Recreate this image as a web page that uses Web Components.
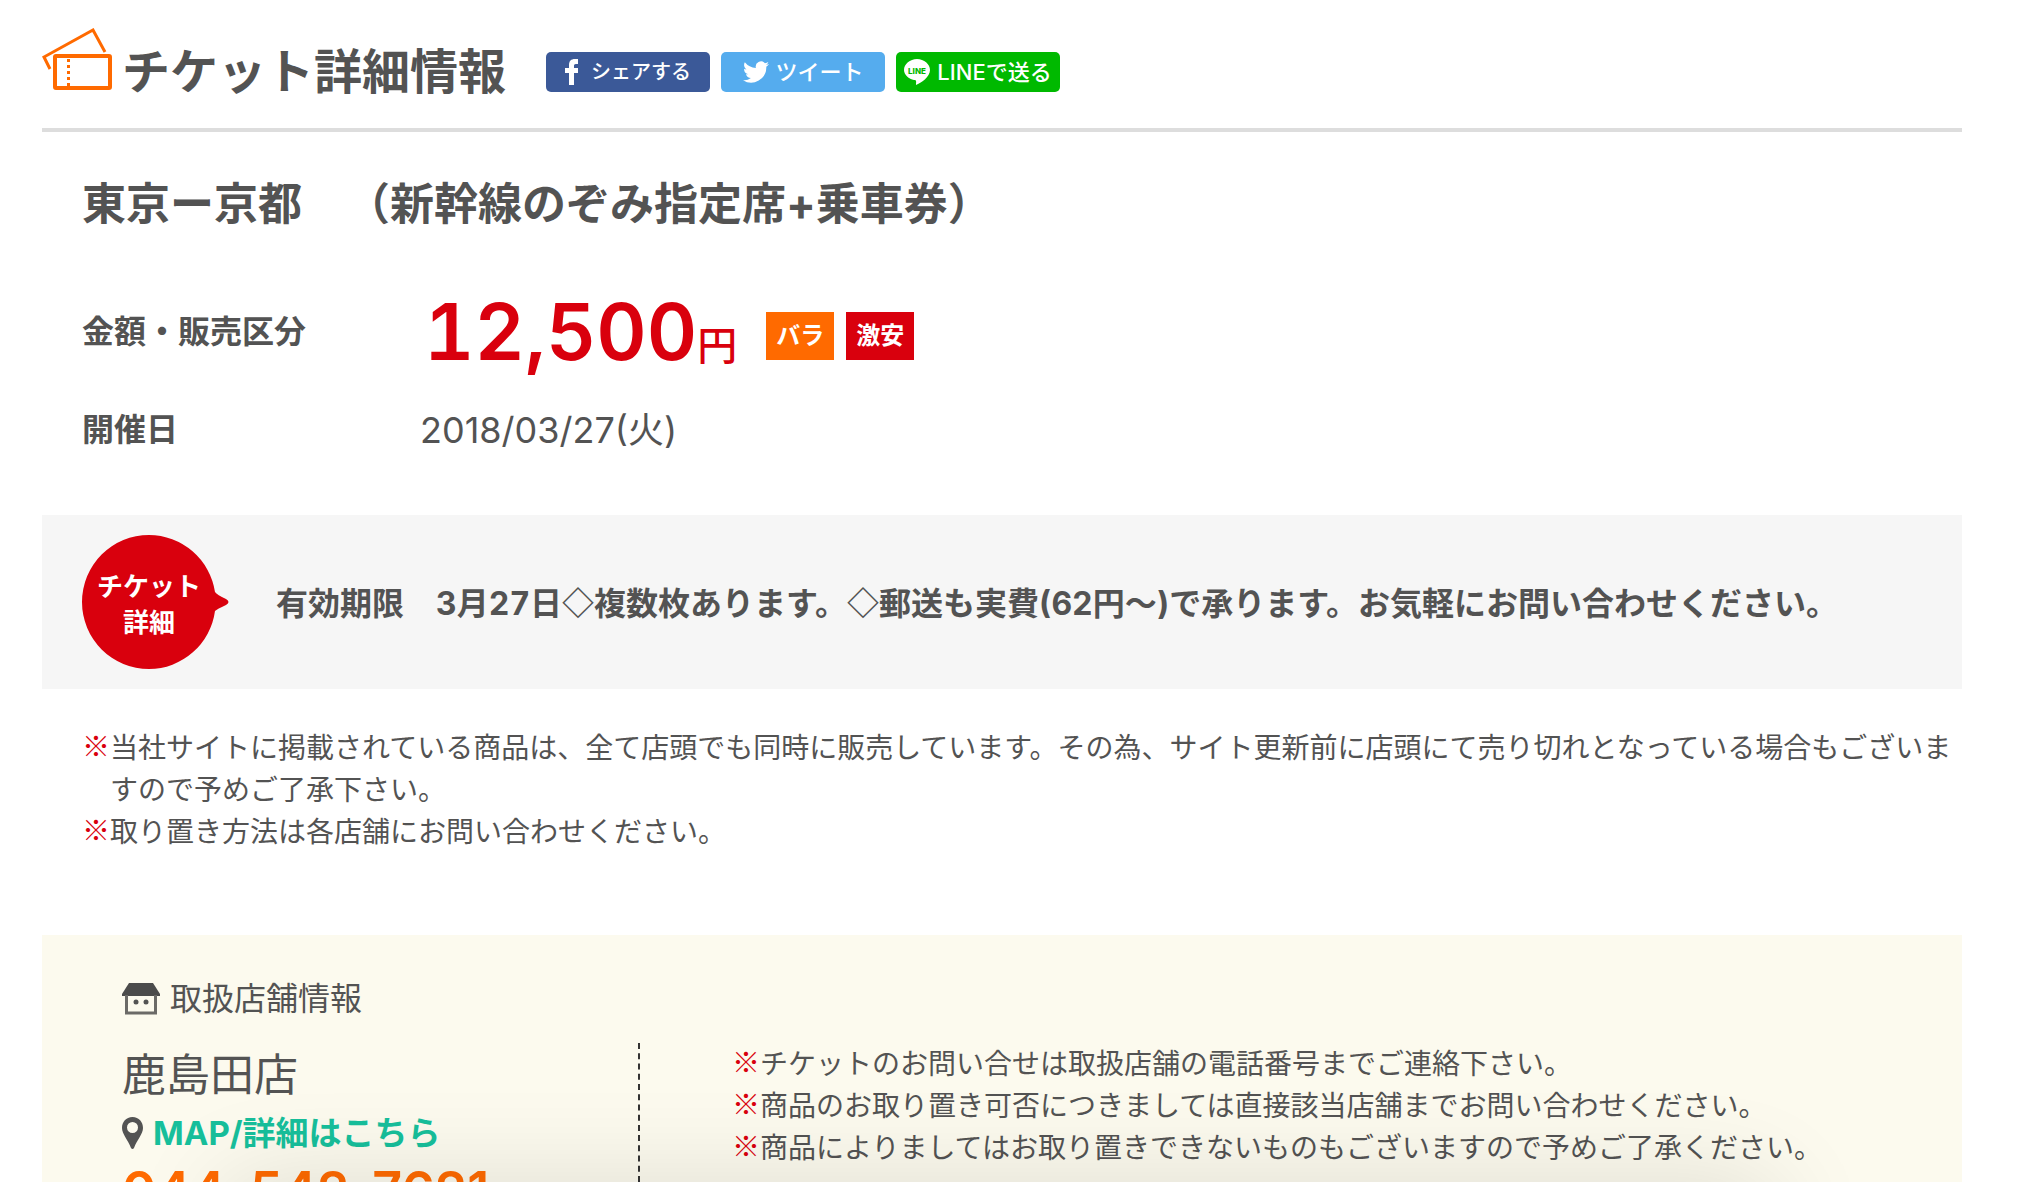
<!DOCTYPE html>
<html lang="ja">
<head>
<meta charset="utf-8">
<meta name="viewport" content="width=device-width, initial-scale=1">
<title>チケット詳細情報</title>
<style>
    body {
        margin: 0;
        background: white;
        color: #535353;
        font-family: Inter, "Noto Sans CJK JP", sans-serif;
        --gray: #535353;
        --red: #d9000d;
        --orange: #ff6a00;
        --green: #17bf9b;
        --symbols: "Noto Sans CJK JP", sans-serif;
    }
</style>
</head>
<body>
<ticket-page></ticket-page>

<script>
function define(name, html) {
    const template = document.createElement('template');
    template.innerHTML = html;

    customElements.define(name, class extends HTMLElement {
        constructor() {
            super();
            const shadow = this.attachShadow({ mode: 'open' });
            shadow.appendChild(template.content.cloneNode(true));
        }
    });
}

define('share-button', `
    <style>
        :host {
            display: block;
            font-size: 22px;
        }

        a {
            display: flex;
            box-sizing: border-box;
            width: 164px;
            height: 40px;
            align-items: center;
            justify-content: center;
            gap: var(--icon-gap, 7px);
            border-radius: 5px;
            background: var(--brand);
            color: white;
            font-weight: 500;
            line-height: 40px;
            white-space: nowrap;
            text-decoration: none;
        }
    </style>
    <a href="#"><slot name="icon"></slot><slot></slot></a>
`);

define('page-header', `
    <style>
        :host {
            display: block;
        }

        header {
            display: flex;
            align-items: center;
            padding: 28px 0 18px;
            border-bottom: 4px solid #ddd;
        }

        .ticket {
            width: 70px;
            height: 62px;
            margin: 0 10px 20px 0;
            fill: none;
            stroke: var(--orange);
        }

        h1 {
            margin: 0 40px 0 0;
            padding-top: 6px;
            font-size: 48px;
            line-height: 72px;
            white-space: nowrap;
        }

        nav {
            display: flex;
            gap: 11px;
            padding-top: 6px;
        }

        .facebook {
            --brand: #3b5998;
            --icon-gap: 12px;
            font-size: 20px;
        }

        .twitter {
            --brand: #55acee;
        }

        .line {
            --brand: #00b900;
        }
    </style>
    <header>
        <svg class="ticket" viewBox="0 0 70 62" aria-hidden="true">
            <path d="M8 41 L2 29 L51 2 L63 24" stroke-width="3"/>
            <rect x="13" y="28" width="55" height="32" rx="1" stroke-width="4"/>
            <path d="M26.500 31v28" stroke-width="3" stroke-dasharray="3 3"/>
        </svg>
        <h1>チケット詳細情報</h1>
        <nav>
            <share-button class="facebook">
                <svg slot="icon" width="14" height="26" viewBox="0 0 14 26" fill="white" aria-hidden="true">
                    <path d="M4 26V14H0V9h4V6c0-4 2-6 6-6h3v5h-2c-2 0-2 1-2 2v2h4v5H9v12z"/>
                </svg>シェアする
            </share-button>
            <share-button class="twitter">
                <svg slot="icon" width="26" height="24" viewBox="0 2 24 20" fill="white" aria-hidden="true">
                    <path d="M24 4.600a10 10 0 0 1-2.800.8 5 5 0 0 0 2.200-2.700 10 10 0 0 1-3.100 1.200 4.900 4.900 0 0 0-8.400 4.500A14 14 0 0 1 1.700 3.100a4.900 4.900 0 0 0 1.500 6.600 5 5 0 0 1-2.200-.6v.1a4.900 4.900 0 0 0 3.900 4.800 5 5 0 0 1-2.200.1 4.900 4.900 0 0 0 4.600 3.400A10 10 0 0 1 0 19.500 14 14 0 0 0 21.500 7.100 10 10 0 0 0 24 4.600z"/>
                </svg>ツイート
            </share-button>
            <share-button class="line">
                <svg slot="icon" width="26" height="26" viewBox="0 0 26 26" aria-hidden="true">
                    <path fill="white" d="M13 0C6 0 0 5 0 11c0 5 5 9 10 10 3 0 2 2 2 5 5-2 14-8 14-15C26 5 20 0 13 0z"/>
                    <text x="13" y="15" text-anchor="middle" font-family="Inter, sans-serif" font-size="8" font-weight="800" fill="#00b900">LINE</text>
                </svg>LINEで送る
            </share-button>
        </nav>
    </header>
`);

define('info-row', `
    <style>
        :host {
            display: grid;
            grid-template-columns: 338px 1fr;
            align-items: center;
        }

        .label {
            font-size: 32px;
            font-weight: 700;
            line-height: 48px;
        }

        .value {
            display: flex;
            align-items: center;
            font-size: 36px;
            line-height: 48px;
        }
    </style>
    <div class="label"><slot name="label"></slot></div>
    <div class="value"><slot></slot></div>
`);

define('price-tag', `
    <style>
        :host {
            display: block;
            margin: 0 29px 0 4px;
            color: var(--red);
            font-size: 78px;
            font-weight: 600;
            font-variant-numeric: tabular-nums;
            line-height: 96px;
            white-space: nowrap;
        }

        small {
            font-size: 40px;
            font-weight: 500;
            line-height: 40px;
        }
    </style>
    <slot></slot><small>円</small>
`);

define('sale-badge', `
    <style>
        :host {
            margin: 8px 12px 0 0;
            padding: 0 10px;
            background: var(--badge);
            color: white;
            font-size: 24px;
            font-weight: 700;
            line-height: 48px;
        }
    </style>
    <slot></slot>
`);

define('ticket-detail', `
    <style>
        :host {
            display: flex;
            align-items: center;
            gap: 46px;
            padding: 20px 40px;
            background: #f6f6f6;
        }

        .bubble {
            display: grid;
            flex: none;
            box-sizing: border-box;
            width: 148px;
            height: 134px;
            padding: 6px 14px 0 0;
            place-content: center;
            color: white;
            font-size: 26px;
            font-weight: 700;
            line-height: 36px;
            text-align: center;
            background: no-repeat url("data:image/svg+xml,%3Csvg xmlns='http://www.w3.org/2000/svg' viewBox='0 0 148 134'%3E%3Cpath fill='%23d9000d' d='M67 0a67 67 0 1 0 0 134a67 67 0 0 0 66-58q2-2 11-6q5-3 0-6q-9-4-11-7A67 67 0 0 0 67 0z'/%3E%3C/svg%3E");
        }

        p {
            margin: 0;
            font-size: 32px;
            font-weight: 700;
            font-variant-numeric: tabular-nums;
            line-height: 48px;
        }
    </style>
    <div class="bubble">チケット<br>詳細</div>
    <p><slot></slot></p>
`);

define('note-item', `
    <style>
        :host {
            display: flex;
            font-size: 28px;
            line-height: 42px;
        }

        .mark {
            flex: none;
            color: var(--red);
            font-family: Roboto, var(--symbols);
            font-weight: 500;
        }
    </style>
    <span class="mark">※</span>
    <span><slot></slot></span>
`);

define('shop-info', `
    <style>
        :host {
            display: block;
            padding: 40px 80px 0;
            background: #fcfaee;
        }

        h2 {
            display: flex;
            align-items: center;
            gap: 10px;
            margin: 0;
            font-size: 32px;
            font-weight: 400;
            line-height: 48px;
        }

        .columns {
            display: grid;
            grid-template-columns: 518px 1fr;
            margin-top: 20px;
        }

        .shop {
            border-right: 2px dashed #333;
        }

        h3 {
            margin: 0;
            font-size: 44px;
            font-weight: 400;
            line-height: 64px;
        }

        .map {
            display: flex;
            align-items: center;
            gap: 10px;
            color: var(--green);
            font-size: 33px;
            font-weight: 700;
            line-height: 52px;
            text-decoration: none;
        }

        .tel {
            display: block;
            color: var(--orange);
            font-size: 52px;
            font-weight: 600;
            line-height: 64px;
            text-decoration: none;
            white-space: nowrap;
        }

        .notes {
            padding-left: 92px;
        }
    </style>
    <h2>
        <svg width="38" height="32" viewBox="0 0 38 32" aria-hidden="true">
            <path fill="#4b4b4b" d="M7 0h24l7 11v2H0v-2z"/>
            <path fill="none" stroke="#6b6a67" stroke-width="3" d="M4.500 12v18h29V12"/>
            <circle cx="14" cy="19" r="2.500" fill="#535353"/>
            <circle cx="24" cy="19" r="2.500" fill="#535353"/>
        </svg>
        取扱店舗情報
    </h2>
    <div class="columns">
        <div class="shop">
            <h3><slot name="name"></slot></h3>
            <a class="map" href="#">
                <svg width="21" height="32" viewBox="0 0 21 32" aria-hidden="true">
                    <path fill="#535353" fill-rule="evenodd" d="M10.500 0C4 0 0 5 0 11c0 6 6 12 9 20q1.500 2 3 0c3-8 9-14 9-20C21 5 17 0 10.500 0zm0 5a5.500 5.500 0 1 1 0 11 5.500 5.500 0 0 1 0-11z"/>
                </svg>
                MAP/詳細はこちら
            </a>
            <a class="tel" href="tel:0445427621"><slot name="tel"></slot></a>
        </div>
        <div class="notes"><slot></slot></div>
    </div>
`);

define('ticket-page', `
    <style>
        :host {
            display: block;
            position: relative;
            height: 100vh;
            overflow: hidden;
        }

        /* soft shade that rises from the bottom edge */
        :host::after {
            content: "";
            position: absolute;
            top: 100%;
            left: 11%;
            right: 13%;
            height: 200px;
            box-shadow: 0 0 100px rgba(0, 0, 0, 0.12);
            pointer-events: none;
        }

        main {
            margin: 0 78px 0 42px;
        }

        .ticket-name {
            margin: 36px 40px 44px;
            font-size: 44px;
            line-height: 72px;
            text-spacing-trim: space-all;
        }

        info-row {
            margin: 0 40px 26px;
        }

        .bara {
            --badge: var(--orange);
        }

        .cheap {
            --badge: var(--red);
        }

        ticket-detail {
            margin-top: 61px;
        }

        .diamond {
            font-family: var(--symbols);
        }

        .notes {
            margin: 38px 0 82px 40px;
        }
    </style>
    <main>
        <page-header></page-header>
        <h2 class="ticket-name">東京ー京都　（新幹線のぞみ指定席+乗車券）</h2>
        <info-row>
            <span slot="label">金額・販売区分</span>
            <price-tag>12,500</price-tag>
            <sale-badge class="bara">バラ</sale-badge>
            <sale-badge class="cheap">激安</sale-badge>
        </info-row>
        <info-row>
            <span slot="label">開催日</span>
            2018/03/27(火)
        </info-row>
        <ticket-detail>有効期限　3月27日<span class="diamond">◇</span>複数枚あります。<span class="diamond">◇</span>郵送も実費(62円〜)で承ります。お気軽にお問い合わせください。</ticket-detail>
        <div class="notes">
            <note-item>当社サイトに掲載されている商品は、全て店頭でも同時に販売しています。その為、サイト更新前に店頭にて売り切れとなっている場合もございますので予めご了承下さい。</note-item>
            <note-item>取り置き方法は各店舗にお問い合わせください。</note-item>
        </div>
        <shop-info>
            <span slot="name">鹿島田店</span>
            <span slot="tel">044-542-7621</span>
            <note-item>チケットのお問い合せは取扱店舗の電話番号までご連絡下さい。</note-item>
            <note-item>商品のお取り置き可否につきましては直接該当店舗までお問い合わせください。</note-item>
            <note-item>商品によりましてはお取り置きできないものもございますので予めご了承ください。</note-item>
        </shop-info>
    </main>
`);
</script>
</body>
</html>
